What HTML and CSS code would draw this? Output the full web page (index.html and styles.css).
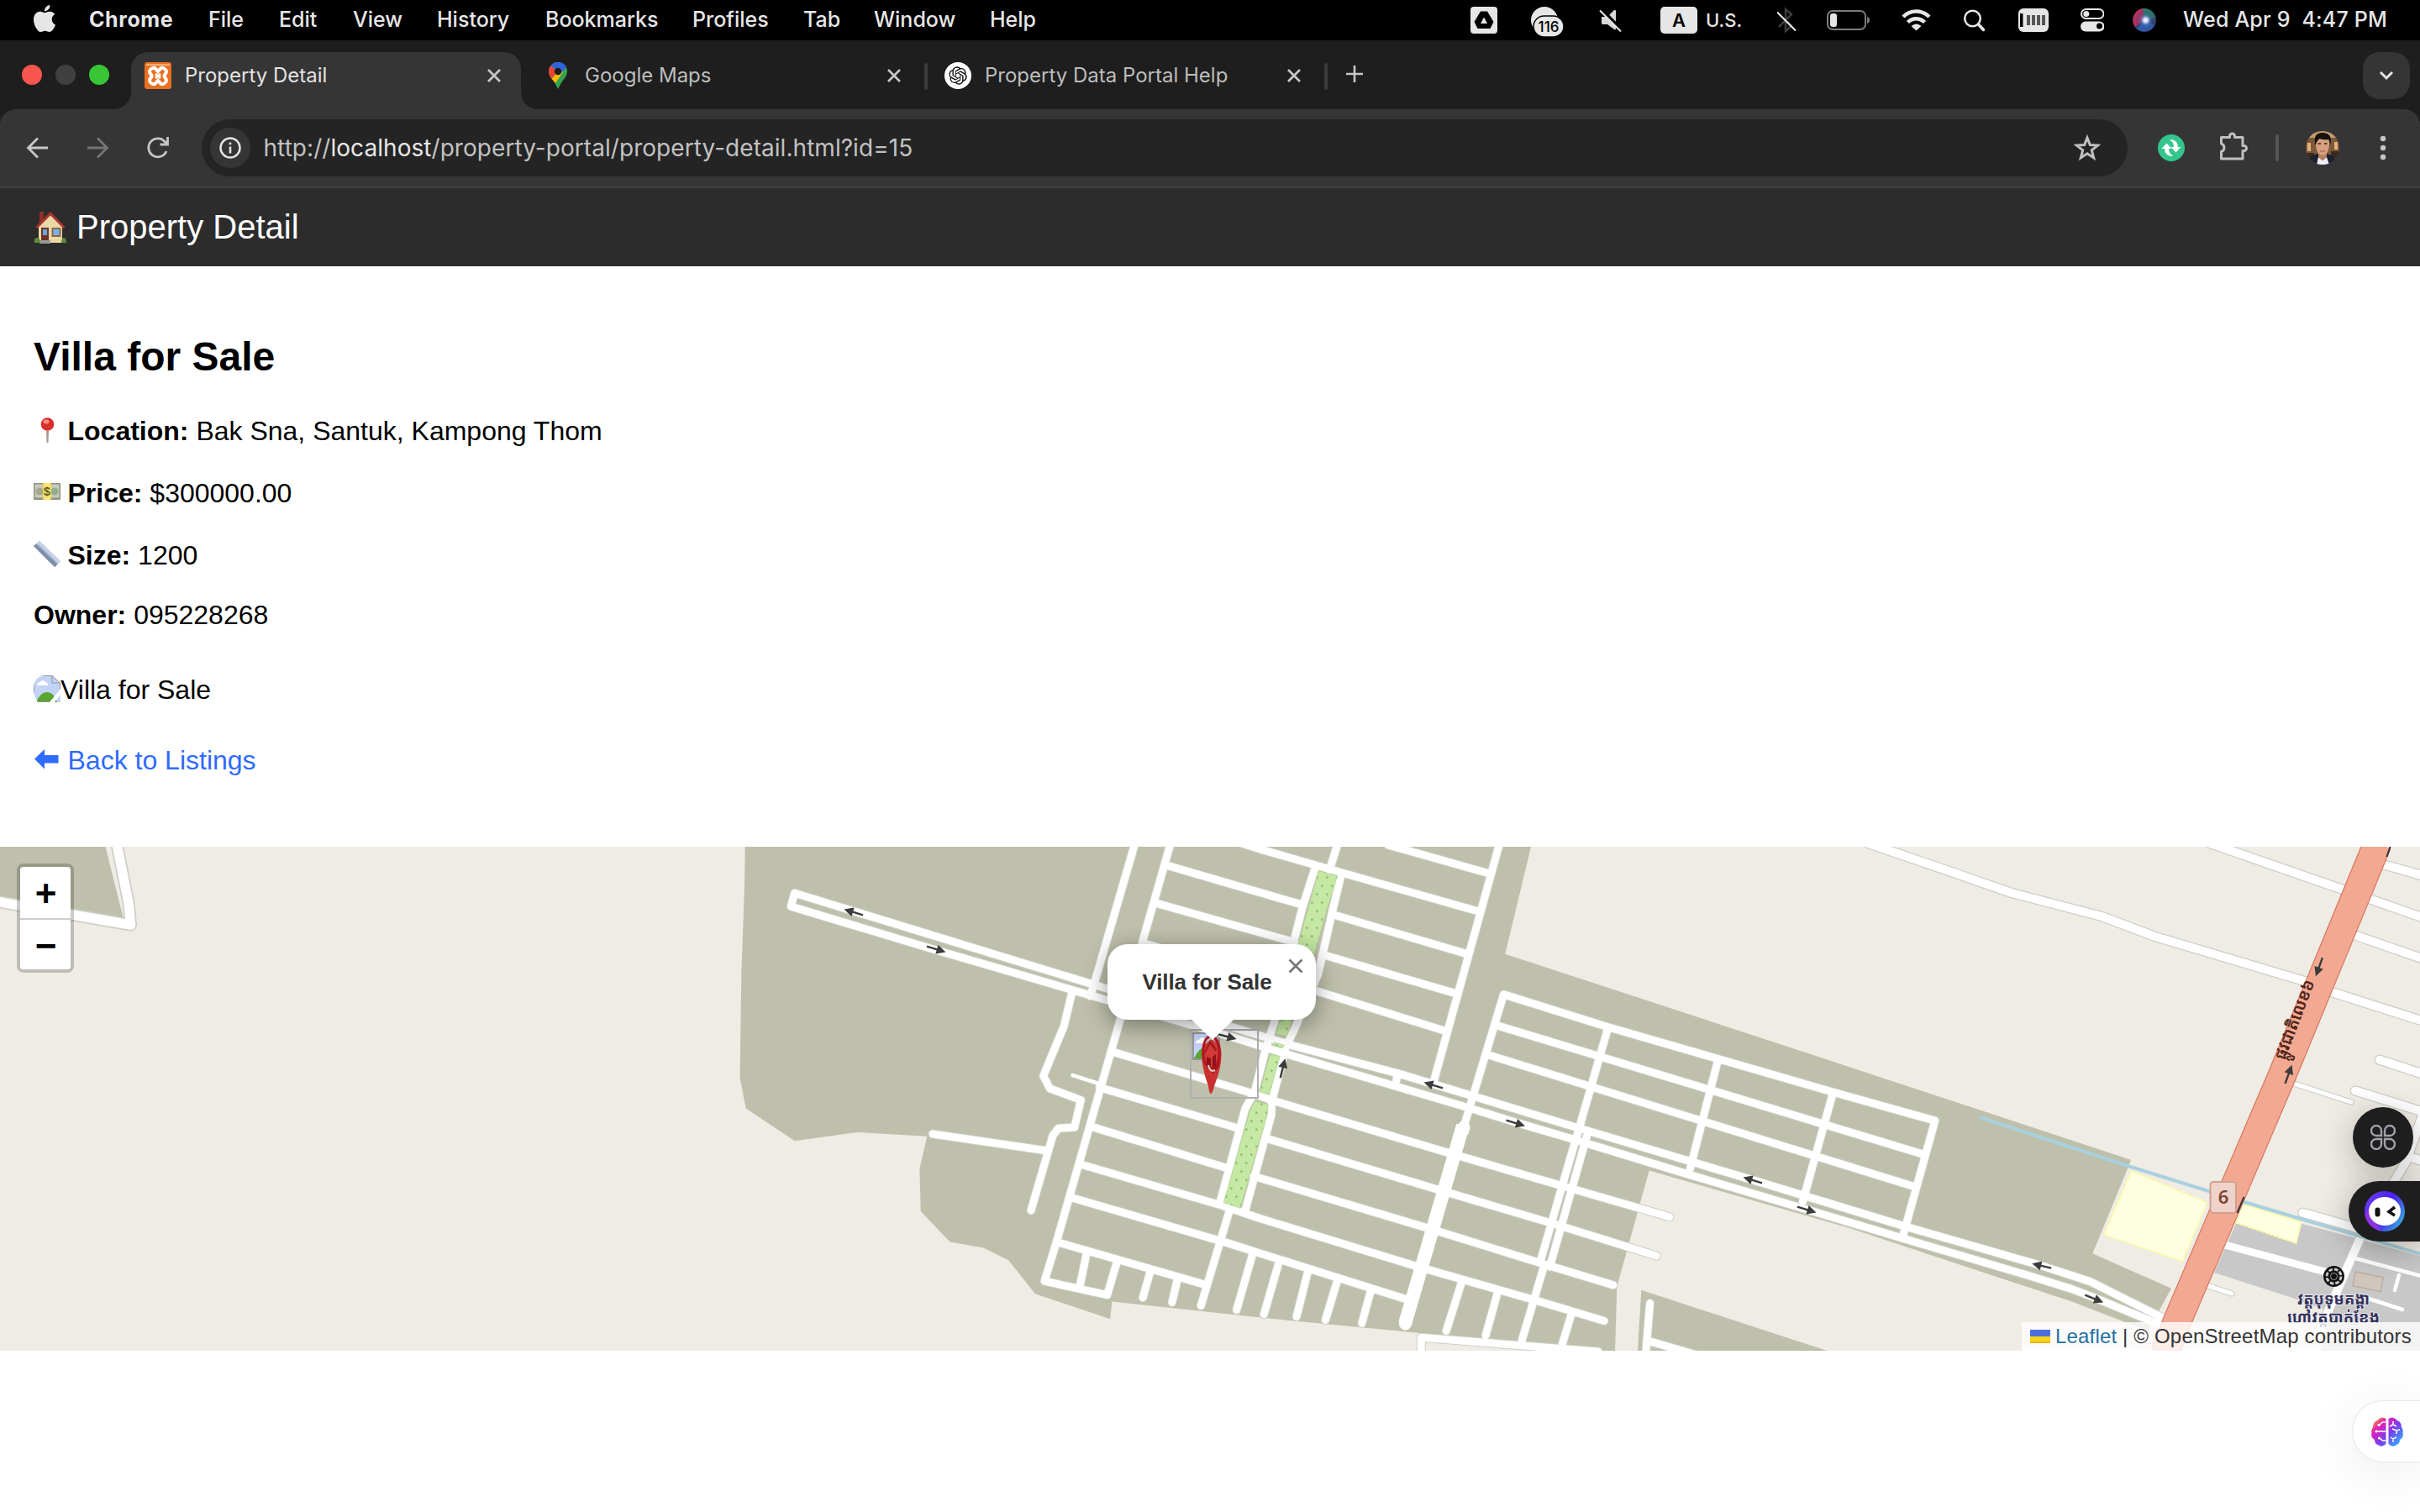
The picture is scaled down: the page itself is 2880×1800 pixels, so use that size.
FILE: index.html
```html
<!DOCTYPE html>
<html lang="en">
<head>
<meta charset="utf-8">
<title>Property Detail</title>
<link rel="stylesheet" href="styles.css">
</head>
<body>
<nav class="menubar">
  <svg class="apple" viewBox="0 0 24 24"><path fill="#e6e6e6" d="M12.152 6.896c-.948 0-2.415-1.078-3.96-1.04-2.04.027-3.91 1.183-4.961 3.014-2.117 3.675-.546 9.103 1.519 12.09 1.013 1.454 2.208 3.09 3.792 3.039 1.52-.065 2.09-.987 3.935-.987 1.831 0 2.35.987 3.96.948 1.637-.026 2.676-1.48 3.676-2.948 1.156-1.688 1.636-3.325 1.662-3.415-.039-.013-3.182-1.221-3.22-4.857-.026-3.04 2.48-4.494 2.597-4.559-1.429-2.09-3.623-2.324-4.39-2.376-2-.156-3.675 1.09-4.61 1.09zM15.53 3.83c.843-1.012 1.4-2.427 1.245-3.83-1.207.052-2.662.805-3.532 1.818-.78.896-1.454 2.338-1.273 3.714 1.338.104 2.715-.688 3.559-1.701"/></svg>
  <div class="menus">
    <span class="app">Chrome</span><span>File</span><span>Edit</span><span>View</span><span>History</span><span>Bookmarks</span><span>Profiles</span><span>Tab</span><span>Window</span><span>Help</span>
  </div>
  <div class="status">
    <svg width="32" height="48" viewBox="0 0 32 48"><rect y="8" width="32" height="32" rx="4" fill="#e6e6e6"/><path d="M12 13.500h8l7.500 12.500-4 8H8.500l-4-8z" fill="#000"/><path d="M16 20.500l4 7.500h-8z" fill="#e6e6e6"/></svg>
    <svg width="44" height="48" viewBox="0 0 44 48"><circle cx="17" cy="24" r="16" fill="#e6e6e6"/><rect x="4" y="19" width="36" height="25" rx="12.500" fill="#e6e6e6" stroke="#000" stroke-width="1.500"/><text x="22" y="38" text-anchor="middle" class="count">116</text></svg>
    <svg width="28" height="48" viewBox="0 0 28 48"><path d="M3 20h7l8-8q2-.5 2 1v21q0 2-2 1l-8-6H4q-1 0-1-2z" fill="#d8d8d8"/><path d="M2 10.500l26 26" stroke="#000" stroke-width="4"/><path d="M1 12.500l25 25" stroke="#e6e6e6" stroke-width="2"/></svg>
    <div class="input-source"><b>A</b><span>U.S.</span></div>
    <svg width="24" height="48" viewBox="0 0 24 48"><path d="M2 32L17 17l-7-6v26l7-6-5-5" fill="none" stroke="#3c3c3c" stroke-width="2.500"/><path d="M0 14.500l22 22" stroke="#e6e6e6" stroke-width="2.200"/></svg>
    <svg width="52" height="48" viewBox="0 0 52 48"><rect x="1" y="13" width="45" height="22" rx="6" fill="none" stroke="#7c7c7c" stroke-width="2"/><rect x="4" y="16" width="8" height="16" rx="3" fill="#e6e6e6"/><path d="M48 20q3 1 3 4t-3 4z" fill="#7c7c7c"/></svg>
    <svg width="36" height="48" viewBox="0 0 36 48"><g fill="none" stroke="#e6e6e6" stroke-width="4.500"><path d="M2 20a22 22 0 0 1 31 0"/><path d="M7.500 26.500a14 14 0 0 1 20 0"/></g><path d="M11.500 31q6-5 12 0l-6 5.500z" fill="#e6e6e6"/></svg>
    <svg width="26" height="48" viewBox="0 0 26 48"><circle cx="10.500" cy="22" r="9.300" fill="none" stroke="#e6e6e6" stroke-width="2.500"/><path d="M17.500 29l6 6.500" stroke="#e6e6e6" stroke-width="3.500" stroke-linecap="round"/></svg>
    <svg width="38" height="48" viewBox="0 0 38 48"><rect x="1" y="10" width="36" height="28" rx="6" fill="#e6e6e6"/><path d="M3 16h3.500v16H3z" fill="#000"/><path d="M13 18v12M19 18v12M25 18v12M31 18v12" stroke="#555" stroke-width="4"/></svg>
    <svg width="28" height="48" viewBox="0 0 28 48"><rect x="1" y="11" width="26.500" height="11" rx="5.500" fill="none" stroke="#e6e6e6" stroke-width="2"/><circle cx="6.800" cy="16.500" r="3.500" fill="#e6e6e6"/><rect y="25.500" width="28.500" height="12" rx="6" fill="#e6e6e6"/><circle cx="22.500" cy="31" r="3.500" fill="#000"/></svg>
    <svg width="28" height="48" viewBox="0 0 28 48"><defs><radialGradient id="siri"><stop offset="0" stop-color="#fff"/><stop offset=".22" stop-color="#cfd6f5"/><stop offset=".5" stop-color="#4a6fae" stop-opacity=".5"/><stop offset="1" stop-color="#24304a" stop-opacity=".1"/></radialGradient></defs><circle cx="14" cy="24" r="14" fill="#31406b"/><path d="M14 10A14 14 0 0 0 3 32l11-8z" fill="#b8325e"/><path d="M12 10a14 14 0 0 1 15 11l-13 3z" fill="#2c7f68"/><path d="M5 34a14 14 0 0 0 21-4l-12-6z" fill="#2e5fb5"/><circle cx="15.500" cy="24" r="12" fill="url(#siri)"/></svg>
    <span class="clock">Wed Apr 9&nbsp; 4:47 PM</span>
  </div>
</nav>

<div class="tabstrip">
  <div class="lights"><i class="red"></i><i class="grey"></i><i class="green"></i></div>
  <div class="tab active">
    <svg width="32" height="32" viewBox="0 0 32 32"><rect width="32" height="32" rx="3" fill="#e8701f"/><path d="M2 2.500h28V4H2z" fill="#ffc9a0"/><path d="M8 8q4-3 6 1l2 2 2-2q2-4 6-1 4 3 0 7-1 1 0 3 4 4 0 7-4 3-6-1l-2-2-2 2q-2 4-6 1-4-3 0-7 1-1 0-3-4-4 0-7z" fill="none" stroke="#fff" stroke-width="4"/><path d="M13 14l6 5M19 14l-6 5" stroke="#fff" stroke-width="3"/></svg>
    <span class="name">Property Detail</span>
    <svg class="close" viewBox="0 0 32 32"><path d="M9 9l14 14M23 9L9 23"/></svg>
  </div>
  <div class="tab">
    <svg width="32" height="32" viewBox="0 0 32 32"><path d="M16 0a11 11 0 0 1 11 11c0 7-6 10-8.500 16.500L16 32l-2.500-5C11 21 5 18 5 11A11 11 0 0 1 16 0z" fill="#34a34f"/><path d="M5.200 12.500A11 11 0 0 1 7.500 4L16 11 8.500 20Q5.500 16 5.200 12.500z" fill="#ea4335"/><path d="M8.500 20L16 11l6.500 0-9.500 14q-2-3-4.500-5z" fill="#fbbc04"/><path d="M7.500 4A11 11 0 0 1 26 6l-8 9-2-4z" fill="#2f62dd"/><circle cx="16" cy="11" r="4.200" fill="#1e1e1e"/></svg>
    <span class="name">Google Maps</span>
    <svg class="close" viewBox="0 0 32 32"><path d="M9 9l14 14M23 9L9 23"/></svg>
  </div>
  <div class="tab">
    <svg width="32" height="32" viewBox="-5 -5 34 34"><circle cx="12" cy="12" r="17" fill="#fff"/><path transform="translate(.6 .6) scale(.95)" fill="#111" d="M22.2819 9.8211a5.9847 5.9847 0 0 0-.5157-4.9108 6.0462 6.0462 0 0 0-6.5098-2.9A6.0651 6.0651 0 0 0 4.9807 4.1818a5.9847 5.9847 0 0 0-3.9977 2.9 6.0462 6.0462 0 0 0 .7427 7.0966 5.98 5.98 0 0 0 .511 4.9107 6.051 6.051 0 0 0 6.5146 2.9001A5.9847 5.9847 0 0 0 13.2599 24a6.0557 6.0557 0 0 0 5.7718-4.2058 5.9894 5.9894 0 0 0 3.9977-2.9001 6.0557 6.0557 0 0 0-.7475-7.0729zm-9.022 12.6081a4.4755 4.4755 0 0 1-2.8764-1.0408l.1419-.0804 4.7783-2.7582a.7948.7948 0 0 0 .3927-.6813v-6.7369l2.02 1.1686a.071.071 0 0 1 .038.052v5.5826a4.504 4.504 0 0 1-4.4945 4.4944zm-9.6607-4.1254a4.4708 4.4708 0 0 1-.5346-3.0137l.142.0852 4.783 2.7582a.7712.7712 0 0 0 .7806 0l5.8428-3.3685v2.3324a.0804.0804 0 0 1-.0332.0615L9.74 19.9502a4.4992 4.4992 0 0 1-6.1408-1.6464zM2.3408 7.8956a4.485 4.485 0 0 1 2.3655-1.9728V11.6a.7664.7664 0 0 0 .3879.6765l5.8144 3.3543-2.0201 1.1685a.0757.0757 0 0 1-.071 0l-4.8303-2.7865A4.504 4.504 0 0 1 2.3408 7.872zm16.5963 3.8558L13.1038 8.364 15.1192 7.2a.0757.0757 0 0 1 .071 0l4.8303 2.7913a4.4944 4.4944 0 0 1-.6765 8.1042v-5.6772a.79.79 0 0 0-.407-.667zm2.0107-3.0231l-.142-.0852-4.7735-2.7818a.7759.7759 0 0 0-.7854 0L9.409 9.2297V6.8974a.0662.0662 0 0 1 .0284-.0615l4.8303-2.7866a4.4992 4.4992 0 0 1 6.6802 4.66zM8.3065 12.863l-2.02-1.1638a.0804.0804 0 0 1-.038-.0567V6.0742a4.4992 4.4992 0 0 1 7.3757-3.4537l-.142.0805L8.704 5.459a.7948.7948 0 0 0-.3927.6813zm1.0976-2.3654l2.602-1.4998 2.6069 1.4998v2.9994l-2.5974 1.4997-2.6067-1.4997Z"/></svg>
    <span class="name">Property Data Portal Help</span>
    <svg class="close" viewBox="0 0 32 32"><path d="M9 9l14 14M23 9L9 23"/></svg>
  </div>
  <svg class="new-tab" viewBox="0 0 24 24"><path d="M12 2v20M2 12h20"/></svg>
  <div class="tab-search"><svg width="20" height="20" viewBox="0 0 20 20"><path d="M3 6l7 7 7-7" fill="none" stroke="#e3e3e3" stroke-width="3"/></svg></div>
</div>

<div class="toolbar">
  <svg class="nav" viewBox="0 0 30 30"><path d="M28 15H5M16 3.500L4.500 15 16 26.500"/></svg>
  <svg class="nav off" viewBox="0 0 30 30"><path d="M3 15h23M15 3.500L26.500 15 15 26.500"/></svg>
  <svg class="nav" viewBox="0 0 30 30"><path d="M25 19A11 11 0 1 1 23.500 8L26 11M26.500 2v9h-9"/></svg>
  <div class="omnibox">
    <div class="site-info"><svg width="28" height="28" viewBox="0 0 28 28"><circle cx="14" cy="14" r="11.500" fill="none" stroke="#e3e3e3" stroke-width="2.500"/><path d="M14 12.500v8M14 7.500v2.800" stroke="#e3e3e3" stroke-width="2.600"/></svg></div>
    <span class="url">http://<em>localhost</em>/property-portal/property-detail.html?id=15</span>
    <svg class="star" viewBox="0 0 32 32"><path d="M16 4l3.300 8.600 9.200.5-7.200 5.800 2.400 9L16 22.800l-7.700 5.100 2.400-9L3.500 13.100l9.200-.5z"/></svg>
  </div>
  <svg class="ext" viewBox="0 0 32 32"><circle cx="16" cy="16" r="16" fill="#34c58c"/><path d="M13.500 6q10.500 0 10.500 9h3.500L21.500 21.500 15.500 15H19q0-6-5.500-9zM18.500 26Q8 26 8 17H4.500l6-6.500 6 6.500H13q0 6 5.500 9z" fill="#fff"/></svg>
  <svg class="puzzle" viewBox="0 0 36 36"><path d="M3.500 7.500h10V6a3 3 0 0 1 6 0v1.500h9.500v10h1.500a3 3 0 0 1 0 6H29V33H3.500v-8.500a5 5 0 0 0 0-9.500z" fill="none" stroke="#c0c0c0" stroke-width="3" stroke-linejoin="round"/></svg>
  <i class="rule"></i>
  <svg class="avatar" viewBox="0 0 40 40"><defs><clipPath id="round"><circle cx="20" cy="20" r="20"/></clipPath></defs><g clip-path="url(#round)"><rect width="40" height="40" fill="#7d593b"/><path d="M0 0h40v8H0z" fill="#c59a70"/><path d="M2 14h4v10H2zM34 13h4v9h-4z" fill="#e0b478"/><path d="M0 26h10v8H0zM30 24h10v8H30z" fill="#3b2a20"/><path d="M2 40q1-11 12-13h11q11 2 13 13z" fill="#1b2130"/><path d="M13 40l2-9 5 4 5-4 3 9z" fill="#eef0f4"/><path d="M15 22h10v9l-5 4-5-4z" fill="#b57f60"/><path d="M12 14q0-7 8-7t8 7q0 9-3 12.500-5 4.500-10 0-3-3.500-3-12.500z" fill="#d6a080"/><path d="M11.500 17Q8 2 20 2t9.500 14l-2-6q-7 1-11-1-3 2-5 8z" fill="#15110f"/><path d="M14.500 15h3.500M22 15h3.500" stroke="#3a241b" stroke-width="1.400"/><path d="M17 24h6" stroke="#a5554a" stroke-width="1.200"/></g></svg>
  <svg class="dots" viewBox="0 0 8 32"><circle cx="4" cy="5" r="3.200"/><circle cx="4" cy="16" r="3.200"/><circle cx="4" cy="27" r="3.200"/></svg>
</div>

<header class="page-header">
  <svg class="house" viewBox="0 0 40 40"><path d="M7 1h5v10l-5 5z" fill="#8c2f25"/><path d="M6 18L20 4l14 14v20H6z" fill="#ecd7a6"/><path d="M20 1L2.500 19l2 2L20 5.500 35.500 21l2-2z" fill="#a8352c"/><path d="M9 20h9v17H9z" fill="#6f3326"/><path d="M11 22h5v7h-5z" fill="#67a6d8"/><path d="M21.500 20h11v11h-11z" fill="#8a6a4a"/><path d="M23.500 22h7v7h-7z" fill="#79b4e4"/><path d="M7 35h13v4H7z" fill="#9a9a94"/><path d="M1 38q-1-6 3-6t4 6zM33 38q0-6 3-6t3 6z" fill="#5d8c3a"/></svg>
  <span>Property Detail</span>
</header>

<main class="detail">
  <h2>Villa for Sale</h2>
  <p><svg class="ico" viewBox="0 0 32 32"><path d="M15 17h3l-.5 14h-2z" fill="#a39a94"/><circle cx="16.500" cy="9" r="7.800" fill="#d9302c"/><ellipse cx="15" cy="6" rx="3.500" ry="2.500" fill="#f58f82"/></svg><b>Location:</b> Bak Sna, Santuk, Kampong Thom</p>
  <p><svg class="ico" viewBox="0 0 32 32"><rect y="5" width="32" height="20" rx="1" fill="#8e9080"/><rect x="1.500" y="6.500" width="29" height="16" fill="#c9cbb8"/><circle cx="7" cy="15" r="4.500" fill="#a3a890"/><circle cx="25" cy="15" r="4.500" fill="#8fae93"/><path d="M11 5h10v20H11z" fill="#f2d34a"/><path d="M12.500 5h7v20h-7z" fill="#fae57c"/><text x="16" y="20" text-anchor="middle" class="dollar">$</text></svg><b>Price:</b> $300000.00</p>
  <p><svg class="ico" viewBox="0 0 32 32"><path d="M0 6l7-6 25 24-7 7z" fill="#a9b9d0"/><path d="M0 6l3-2.500 25.500 24.500-3.500 3z" fill="#7e8ea8"/><path d="M4.500 2.200L7 0l25 24-2.500 2.500z" fill="#c8d4e6"/></svg><b>Size:</b> 1200</p>
  <p class="owner"><b>Owner:</b> 095228268</p>
  <p class="photo"><svg class="broken" viewBox="0 0 32 32"><defs><clipPath id="roundPhoto"><path d="M16 0h16v32H5Q0 24 0 16 0 0 16 0z"/></clipPath></defs><g clip-path="url(#roundPhoto)"><path d="M0 0h22l10 9v23H0z" fill="#c2d3f5"/><path d="M3 32Q8 20 16 20t12 12z" fill="#58a52f"/><path d="M4 12q0-4 4-4 3-4 6 0 3 0 3 4z" fill="#fff"/><path d="M18 33L33 15v7l-9 11z" fill="#fff"/><path d="M22 0l10 9V0z" fill="#fff"/><path d="M0 31.500h19M.500 0v32M0 .500h22l9.500 8.500h-9.500V0M31.500 9v7" fill="none" stroke="#8f959c"/></g></svg>Villa for Sale</p>
  <a class="back"><svg class="ico" viewBox="0 0 32 32"><path d="M1 15.500L13 4v7h16.500v9.500H13v7z" fill="#2f6bff"/></svg>Back to Listings</a>
</main>

<section class="map">
  <svg class="tiles" viewBox="0 1008 2880 600" preserveAspectRatio="none">
    <defs>
      <pattern id="dots" width="36" height="60" patternUnits="userSpaceOnUse" patternTransform="translate(12 -8)"><rect width="36" height="60" fill="#c5e8a2"/><circle cx="10" cy="22" r="4" fill="#8bb873"/><circle cx="28" cy="52" r="4" fill="#8bb873"/></pattern>
      <g id="arrow"><path d="M-11.500 0H3" stroke="#3c3c3c" stroke-width="2.400"/><path d="M1-5.500L12 0 1 5.500z" fill="#3c3c3c"/></g>
      <g id="estate" transform="translate(860 1000) scale(.446429 .395413)">
        <path d="M192 160L1523 620 1804 704 2284 868 2747 1024 3157 1165 3517 1282 3647 1330 3850 1445M192 160L182 200 570 332 762 395 1348 590 1514 648 1994 808 2114 850 2274 903 2584 1010 2889 1112 3157 1203 3477 1310 3597 1352 3657 1378 3850 1468"/>
        <path d="M1098 15L990 435 980 470M1193 15L1060 540 890 1210 858 1328 1025 1370 1050 1275M970 1245L952 1345"/>
        <path d="M930 465L910 560 855 710 872 748 955 783 938 865 895 868 880 890 822 1115M560 885L862 935"/>
        <path d="M1579 85L1546 202 1523 303 1471 548 1449 624 1418 759 1393 809 1325 1095M1649 105L1628 202 1587 405 1523 573 1501 624 1463 792 1463 827 1392 1120M1640 10L1618 90"/>
        <path d="M1370 5L1434 28 1649 98 2015 215M1774 15L2040 100M1180 75L1545 195M1155 190L1525 308M1125 312L1495 430M1629 225L1984 343M1599 345L1954 462M1584 455L1924 574M2070 15L1896 725"/>
        <path d="M1040 638L1410 762 1474 787 1944 945 2524 1135M1005 745L1375 868M1454 900L1914 1055 2214 1155 2489 1252M980 862L1345 988M1415 1012L1884 1170 2184 1275 2374 1340M950 975L1330 1100 1434 1140 1854 1285 2164 1385 2350 1448M925 1075L1345 1213 1434 1245 1829 1385M890 1210L1290 1340"/>
        <path d="M1140 1300L1120 1378M1212 1325L1198 1392M1350 1120L1275 1402M1412 1250L1370 1415M1482 1275L1443 1428M1560 1300L1530 1435M1639 1325L1607 1445M1727 1360L1704 1455M1969 1335L1929 1478M2064 1370L2034 1492M2262 1430L2239 1515"/>
        <path d="M1974 870L2082 465 2357 562 2957 758 3232 845 3147 1190M2069 560L3197 945M2044 648L3172 1042M2359 570L2284 865 2275 900M2654 660L2579 990M2959 765L2879 1090M1799 703L1796 725"/>
        <path d="M2277 890L2179 1272M2304 890L2205 1285M2189 1285L2131 1505M1862 1550L1862 1498 2334 1540M2472 1395L2461 1545M2474 1510L2594 1550"/>
      </g>
      <g id="east">
        <path d="M2223 1004L2309.500 1033.600 2394 1063 2501.400 1091 2564 1114.700 2742.500 1168M2630 1004L2789.500 1059.500M2838.500 1029.700L2885 1043M2820.500 1070.400L2885 1093M2800.500 1112.700L2885 1142M2771.500 1180L2885 1216M2832 1261.800L2885 1279M2803 1298.500L2885 1324M2740.500 1443.700L2830 1469"/>
        <path d="M2885 1322L2863 1383.500 2809.500 1472.500 2758 1590M2870 1378L2885 1383"/>
      </g>
    </defs>
    <rect y="1008" width="2880" height="600" fill="#efece5"/>
    <path d="M0 1008H125.500L147 1094 86 1084 0 1072z" fill="#bec0ab"/>
    <g transform="translate(860 1000) scale(.446429 .395413)" fill="#bec0ab">
      <path d="M60 15L58 150 50 400 46 715 62 808 192 906 360 880 545 892 525 990 528 1118 606 1210 695 1228 762 1265 833 1366 1033 1442 1038 1390 1434 1438 1854 1484 2304 1540H2379L2384 1345 2470 995 3002 1168 3597 1390 3800 1478 3862 1350 3652 1245 3747 985 3754 963 2957 666 2086 343 2156 15z"/>
      <path d="M2449 1355L2964 1545H2439z"/>
    </g>
    <g transform="translate(2400 1280) scale(.333333)">
      <path d="M785 525L1000 600 1018 530 1440 645V985H1080L1130 850 1000 800 705 705z" fill="#c8c8c8"/>
    </g>
    <g fill="none" stroke-linecap="round" stroke-linejoin="round">
      <g stroke="#cfcec6">
        <path d="M138 1000L153 1075 155.500 1101 80 1088 -5 1073" stroke-width="15"/>
        <use href="#estate" class="casing"/><use href="#east" stroke-width="12.500"/>
        <path d="M2730 1290L2798 1312M2627 1530.500L2656 1540" stroke-width="7.500"/>
      </g>
      <g stroke="#fff">
        <path d="M138 1000L153 1075 155.500 1101 80 1088 -5 1073" stroke-width="11.500"/>
        <use href="#estate" class="road"/><use href="#east" stroke-width="10"/>
        <path d="M2730 1290L2798 1312M2627 1530.500L2656 1540" stroke-width="5"/>
        <path d="M1276.500 1280L1309 1290.500" stroke-width="4.500"/>
        <path d="M1741 1340L1672 1576" stroke-width="16" stroke-linecap="butt"/><path d="M1742 1342L1741 1346M1673 1574l-.5 2" stroke-width="15"/>
        <path d="M2646 1481.500L2767 1514" stroke-width="9"/>
        <path d="M2803 1498L2885 1520M2855 1518L2850 1536M2810 1543L2859 1559" stroke-width="4.500"/>
      </g>
    </g>
    <g transform="translate(1200 1080) scale(.333333)" fill="url(#dots)" stroke="#a9cf8d" stroke-width="1.500">
      <path d="M1108-130L1175-112 1140 0 1085 190 995 460 957 452 1035 130 1072 0z"/><path d="M948 482L985 492 982 502 944 493z"/><path d="M935 524L970 533 932 668 897 660z"/><path d="M880 692L928 705 922 750 828 1075 768 1055 862 730z"/>
    </g>
    <g transform="translate(2400 1280) scale(.333333)">
      <path d="M410 342L680 455 592 665 312 570z" fill="#feffe0" stroke="#fbfba6" stroke-width="6" stroke-dasharray="12 4"/>
      <path d="M808 460L1015 525 998 600 778 525z" fill="#feffe0" stroke="#fbfba6" stroke-width="6" stroke-dasharray="12 4"/>
      <path d="M1210 702L1308 722 1300 773 1200 752z" fill="#d1c6bb" stroke="#bbaa9c" stroke-width="4"/>
    </g>
    <path d="M2356 1330L2537 1389.500 2630 1418.500 2671 1431 2738 1451 2885 1494" fill="none" stroke="#a9d0de" stroke-width="4"/>
    <path d="M2829.500 1004L2716 1280 2591 1573 2576 1612" fill="none" stroke="#d67a62" stroke-width="34.500"/>
    <path d="M2829.500 1004L2716 1280 2591 1573 2576 1612" fill="none" stroke="#f3a991" stroke-width="32"/>
    <path d="M2844.500 1008l-4 12M2670.500 1425l-8 19" stroke="#333" stroke-width="2"/>
    <use href="#arrow" transform="translate(1016 1086) rotate(197)"/>
    <use href="#arrow" transform="translate(1114 1130) rotate(17)"/>
    <use href="#arrow" transform="translate(1460 1234) rotate(15)"/>
    <use href="#arrow" transform="translate(1526.500 1272) rotate(-76)"/>
    <use href="#arrow" transform="translate(1706 1292) rotate(197)"/>
    <use href="#arrow" transform="translate(1803.500 1337) rotate(17)"/>
    <use href="#arrow" transform="translate(2086 1405) rotate(197)"/>
    <use href="#arrow" transform="translate(2150 1440) rotate(17)"/>
    <use href="#arrow" transform="translate(2430 1507) rotate(193)"/>
    <use href="#arrow" transform="translate(2492 1546) rotate(22)"/>
    <use href="#arrow" transform="translate(2760 1151) rotate(110)"/>
    <use href="#arrow" transform="translate(2723.500 1279) rotate(-70)"/>
    <text class="street" transform="translate(2731 1214) rotate(-69)" text-anchor="middle" textLength="100" lengthAdjust="spacingAndGlyphs" y="6">ផ្លូវជាតិលេខ៦</text>
    <rect x="2630.500" y="1407" width="30.500" height="37" rx="3.500" fill="#efd2c9" stroke="#d49f90" stroke-width="2"/>
    <text x="2646" y="1433" text-anchor="middle" class="shield">6</text>
    <g transform="translate(2777.500 1519.500)"><circle r="12.500" fill="#111"/><circle r="8.500" fill="none" stroke="#c8c8c8" stroke-width="3" stroke-dasharray="4.700 2"/><circle r="4" fill="none" stroke="#999" stroke-width="1"/></g>
    <text class="place" x="2777" y="1553" text-anchor="middle" textLength="86" lengthAdjust="spacingAndGlyphs">វត្តបុទុមគង្គា</text>
    <text class="place" x="2777" y="1574.500" text-anchor="middle" textLength="110" lengthAdjust="spacingAndGlyphs">ហៅវត្តបាក់ខែង</text>
  </svg>

  <div class="zoom"><span>+</span><span>−</span></div>

  <svg class="marker" viewBox="0 0 82 84">
    <rect x="1" y="1" width="80" height="81" fill="none" stroke="#b0b0b0" stroke-width="2"/>
    <path d="M4 5h25l6 6v25H4z" fill="#c2d3f5" stroke="#858585" stroke-width="1.500"/><path d="M7 17q0-4 4-4 2-5 6-2l4 6z" fill="#fff"/><path d="M5 35q6-13 14-14v14z" fill="#58a52f"/>
    <path d="M25 7q11 1 12.500 22Q38 46 29 68q-2 9-4 9t-3-9Q14 46 14 29 14.500 8 25 7z" fill="#c9302f"/>
    <path d="M25 8q9 3 9.500 21 0 17-8 22" fill="none" stroke="#a5141c" stroke-width="4"/><ellipse cx="25.500" cy="28" rx="9.500" ry="19" fill="#d23a36" stroke="#b01820" stroke-width="3"/>
    <path d="M18 18q2-7 7-8 4 1 6 6l-5-4z" fill="#b9c2dd"/><path d="M20 33v12l5 2V35zM27 33v14l4-3V30z" fill="#8d1218"/><path d="M17 28l7-15 8 11-1 3-7-9-6 12z" fill="#a51c20"/><path d="M22 43q2 9 8 6" fill="none" stroke="#e9c6c0" stroke-width="2.200"/>
  </svg>

  <div class="popup"><span>Villa for Sale</span><svg class="dismiss" viewBox="0 0 18 18"><path d="M1.500 1.500l15 15M16.500 1.500l-15 15" stroke="#757575" stroke-width="2.600"/></svg></div>
  <svg class="tip" viewBox="0 0 52 26"><path d="M0 0h52L26 25z" fill="#fff"/></svg>

  <div class="credit"><svg width="24" height="16" viewBox="0 0 24 16"><path d="M0 0h24v8H0z" fill="#4c6fde"/><path d="M0 8h24v8H0z" fill="#fad216"/><path d="M0 14.500h24V16H0z" fill="#e0b000"/></svg><span><a>Leaflet</a> | © OpenStreetMap contributors</span></div>
</section>

<div class="fab"><svg width="30" height="30" viewBox="0 0 30 30"><g fill="none" stroke="#a3a1ab" stroke-width="2.400"><path d="M13 13H7a6 6 0 1 1 6-6zM17 13h6a6 6 0 1 0-6-6zM13 17H7a6 6 0 1 0 6 6zM17 17h6a6 6 0 1 1-6 6z"/></g></svg></div>
<div class="face"><svg width="48" height="48" viewBox="0 0 48 48"><defs><linearGradient id="ring" x1="0" y1=".2" x2="1" y2=".8"><stop offset="0" stop-color="#6a3df5"/><stop offset=".5" stop-color="#4a1ef0"/><stop offset="1" stop-color="#35b5d8"/></linearGradient></defs><circle cx="24" cy="24" r="24" fill="url(#ring)"/><path d="M.500 29A24 24 0 0 0 20 47.500L16 40 4 22z" fill="#8b33e0"/><ellipse cx="24" cy="24" rx="19" ry="17" fill="#fff"/><rect x="12.500" y="19.500" width="6" height="11" rx="3" fill="#111"/><path d="M36 19l-7 5.500 7 4.500" fill="none" stroke="#111" stroke-width="3.500"/></svg></div>
<div class="brain"><svg width="38" height="36" viewBox="0 0 38 36"><defs><linearGradient id="mind" gradientUnits="userSpaceOnUse" x1="4" y1="2" x2="34" y2="32"><stop offset="0" stop-color="#f5a623"/><stop offset=".25" stop-color="#e81fb4"/><stop offset=".6" stop-color="#7a3df0"/><stop offset="1" stop-color="#35a8ff"/></linearGradient></defs><path d="M17.500 3v30q-5 5-9.500 1-4-1-4-6-5-3-3.500-8-1-4 1.500-7 0-6 5-8Q12-1 17.500 3zM20.500 3v30q5 5 9.500 1 4-1 4-6 5-3 3.500-8 1-4-1.500-7 0-6-5-8Q26-1 20.500 3z" fill="url(#mind)"/><g fill="none" stroke="#fff" stroke-width="1.500"><path d="M17.500 7h-4L10 10M17.500 18H6M17.500 29h-4L10 26M26 6v4l-4 2M26 10l4 2M25 15l5 2 4-1M30 17v4M23 25l3 2 4-2M26 27v4"/></g><circle cx="9" cy="10.500" r="1.600" fill="#fff"/><circle cx="6" cy="18" r="1.600" fill="#fff"/><circle cx="9.500" cy="26" r="1.600" fill="#fff"/></svg></div>
</body>
</html>
```
FILE: styles.css
```css
* { box-sizing: border-box; }
body { margin: 0; width: 2880px; height: 1800px; overflow: hidden; position: relative; background: #fff; color: #000; font-family: "Liberation Sans", Arial, sans-serif; }
svg { display: block; flex: none; }
p, h2 { margin: 0; }

/* macOS menu bar */
.menubar { display: flex; align-items: center; height: 48px; background: #000; color: #e6e6e6; font: 500 25px/46px Inter, sans-serif; white-space: pre; }
.apple { width: 32px; height: 32px; margin: -5px 37px 0 37px; }
.menus { display: grid; grid-template-columns: 142px 84px 88px 100px 129px 175px 132px 84px 138px 60px; height: 48px; }
.app { font-weight: 700; letter-spacing: .6px; }
.status { display: grid; grid-template-columns: 71px 82px 73px 139px 59px 89px 74px 64px 75px 62px 60px 251px; margin-left: 512px; height: 48px; }
.clock { letter-spacing: .2px; }
.count { font: 500 17px Inter, sans-serif; fill: #000; }
.input-source { display: flex; align-items: center; gap: 10px; font-size: 22px; }
.input-source b { width: 44px; height: 32px; border-radius: 5px; background: #e6e6e6; color: #000; text-align: center; line-height: 33px; font-weight: 600; }

/* Tab strip */
.tabstrip { display: flex; align-items: flex-end; height: 82px; background: #1e1e1e; font-family: Inter, sans-serif; }
.lights { display: flex; gap: 16px; width: 156px; padding-left: 26px; height: 82px; align-items: center; }
.lights i { width: 24px; height: 24px; border-radius: 50%; }
.red { background: #f9564f; }
.grey { background: #404040; }
.green { background: #38c636; }
.tab { position: relative; display: flex; align-items: center; width: 476px; height: 68px; padding: 0 28px 12px 16px; color: #bdbdbd; font-size: 24px; }
.tab + .tab::after { content: ""; position: absolute; right: 4px; top: 13px; width: 4px; height: 32px; border-radius: 2px; background: #3c3c3c; }
.tab.active { width: 464px; margin-right: 12px; padding-right: 16px; background: #353535; border-radius: 20px 20px 0 0; color: #e3e3e3; }
.tab.active::before, .tab.active::after { content: ""; position: absolute; bottom: 0; width: 20px; height: 20px; }
.tab.active::before { left: -20px; background: radial-gradient(circle at 0 0, transparent 19.5px, #353535 20px); }
.tab.active::after { right: -20px; background: radial-gradient(circle at 100% 0, transparent 19.5px, #353535 20px); }
.name { flex: 1; margin: -1px 0 0 16px; white-space: nowrap; }
.close { width: 32px; height: 32px; fill: none; stroke: #c7c7c7; stroke-width: 2.8; }
.new-tab { width: 24px; height: 24px; margin: 0 0 30px 16px; fill: none; stroke: #c7c7c7; stroke-width: 2.6; }
.tab-search { display: flex; align-items: center; justify-content: center; width: 56px; height: 56px; margin: 0 12px 12px auto; border-radius: 20px; background: #353535; }

/* Toolbar */
.toolbar { display: flex; align-items: center; height: 94px; border-bottom: 2px solid #3e3e3e; background: radial-gradient(circle at 20px 20px, #353535 20px, #1e1e1e 20.5px) 0 0 / 20px 20px no-repeat, radial-gradient(circle at 0 20px, #353535 20px, #1e1e1e 20.5px) 100% 0 / 20px 20px no-repeat, #353535; padding-left: 29px; }
.nav { width: 30px; height: 30px; margin-right: 42px; fill: none; stroke: #c7c7c7; stroke-width: 2.8; }
.nav.off { stroke: #757575; }
.nav:nth-child(3) { margin-right: 37px; }
.omnibox { display: flex; align-items: center; width: 2292px; height: 68px; border-radius: 34px; background: #242424; padding: 0 32px 0 10px; }
.site-info { display: flex; align-items: center; justify-content: center; width: 48px; height: 48px; border-radius: 50%; background: #353535; }
.url { flex: 1; margin-left: 15.5px; color: #c2c2c2; font: 28px Inter, sans-serif; letter-spacing: .05px; white-space: nowrap; }
.url em { font-style: normal; color: #e8e8e8; }
.star { width: 32px; height: 32px; fill: none; stroke: #c0c0c0; stroke-width: 3; }
.ext { width: 32px; height: 32px; margin-left: 36px; }
.puzzle { width: 36px; height: 36px; margin: -4px 0 0 40px; }
.rule { width: 4px; height: 32px; margin-left: 32px; border-radius: 2px; background: #555; }
.avatar { width: 40px; height: 40px; margin-left: 32px; }
.dots { width: 8px; height: 32px; margin-left: 48px; fill: #c7c7c7; }

/* Page */
.page-header { display: flex; align-items: center; height: 93px; padding-left: 40px; background: #2c2c2c; color: #fff; font-size: 40px; }
.house { width: 40px; height: 40px; margin-right: 11px; }
.detail { height: 691px; padding: 80px 40px 0; font-size: 32px; line-height: 40px; }
.detail h2 { font-size: 48px; line-height: 56px; margin-bottom: 40px; }
.detail p { display: flex; height: 40px; margin-bottom: 34px; white-space: pre; }
.detail .owner { margin: -3px 0 49px; }
.detail .photo { margin-bottom: 44px; }
.ico { width: 32px; height: 32px; margin: 3px 8.5px 0 0; }
.broken { width: 32px; height: 32px; margin-top: 3px; }
.dollar { font: bold 14px "Liberation Sans", sans-serif; fill: #5e5a1c; }
.back { display: flex; color: #2f6bff; }

/* Map */
.map { position: relative; height: 600px; overflow: hidden; }
.tiles { width: 2880px; height: 600px; }
#estate path { vector-effect: non-scaling-stroke; }
.casing { stroke-width: 11px; }
.road { stroke-width: 9px; }
.street { font: 19px "Noto Sans Khmer", "Khmer OS", "Noto Sans", sans-serif; fill: #4a2018; stroke: #4a2018; stroke-width: .5px; }
.shield { font: 600 22px "Noto Sans", sans-serif; fill: #7d4538; }
.place { font: bold 19px "Noto Sans Khmer", "Khmer OS", "Noto Sans", sans-serif; fill: #32305a; stroke: #e9e9ee; stroke-width: 2px; paint-order: stroke; }
.zoom { position: absolute; left: 20px; top: 20px; width: 68px; height: 130px; border: 4px solid rgba(0, 0, 0, .2); border-radius: 8px; background-clip: padding-box; }
.zoom span { display: block; height: 61px; background: #fff; border-radius: 4px 4px 0 0; text-align: center; text-indent: 1px; font: bold 44px/63px "Liberation Sans", sans-serif; }
.zoom span + span { border-top: 2px solid #ccc; border-radius: 0 0 4px 4px; line-height: 61px; }
.marker { position: absolute; left: 1416px; top: 217px; width: 82px; height: 84px; }
.popup { position: absolute; left: 1318px; top: 116px; display: flex; justify-content: center; width: 248px; height: 90px; padding-right: 11px; border-radius: 24px; background: #fff; box-shadow: 0 6px 28px rgba(0, 0, 0, .4); color: #333; font: bold 26px/90px "Liberation Sans", sans-serif; letter-spacing: -.1px; white-space: nowrap; }
.dismiss { position: absolute; right: 15px; top: 17px; width: 18px; height: 18px; }
.tip { position: absolute; left: 1417px; top: 205px; width: 52px; height: 26px; }
.credit { position: absolute; right: 0; bottom: 0; display: flex; align-items: center; gap: 6px; width: 474px; height: 34px; padding-left: 10px; background: rgba(255, 255, 255, .8); color: #333; font-size: 24px; line-height: 34px; letter-spacing: .17px; white-space: nowrap; }
.credit a { color: #2470a5; }

/* Floating assistants */
.fab, .face, .brain { position: absolute; display: flex; align-items: center; justify-content: center; height: 72px; }
.fab { left: 2800px; top: 1318px; width: 72px; border-radius: 36px; background: #1e1e1e; box-shadow: 0 8px 40px rgba(0, 0, 0, .25); }
.face { left: 2795px; top: 1406px; width: 85px; border-radius: 36px 0 0 36px; background: #1e1e1e; box-shadow: 0 8px 40px rgba(0, 0, 0, .3); }
.brain { left: 2799px; top: 1667px; width: 81px; height: 74px; padding-left: 2px; border: 1px solid #e8e8e8; border-right: 0; border-radius: 37px 0 0 37px; background: #fff; box-shadow: 0 10px 60px rgba(0, 0, 0, .08); }
```
